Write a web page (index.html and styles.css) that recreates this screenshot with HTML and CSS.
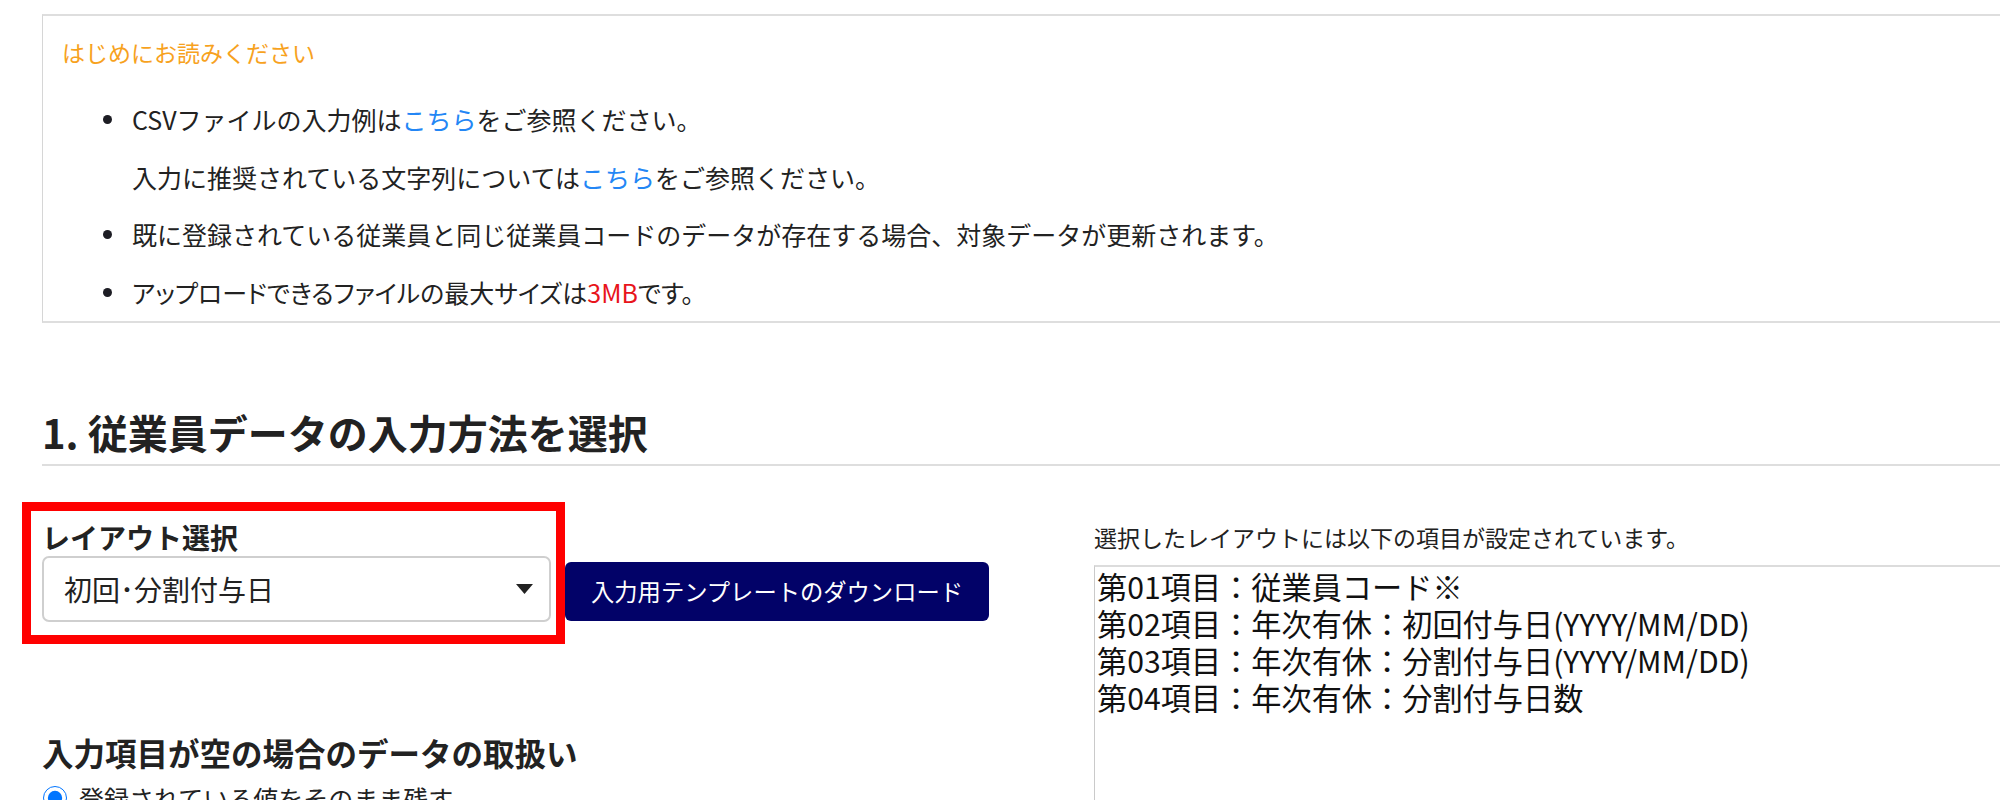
FILE: index.html
```html
<!DOCTYPE html>
<html lang="ja">
<head>
<meta charset="utf-8">
<title>従業員データの入力</title>
<link rel="stylesheet" href="styles.css">
</head>
<body>
<div class="page">
  <section class="notice">
    <h3 class="notice-title">はじめにお読みください</h3>
    <ul class="notes">
      <li>
        <div>
          <p>CSVファイルの入力例は<a class="link" href="#">こちら</a>をご参照ください。</p>
          <p>入力に推奨されている文字列については<a class="link" href="#">こちら</a>をご参照ください。</p>
        </div>
      </li>
      <li><p>既に登録されている従業員と同じ従業員コードのデータが存在する場合、対象データが更新されます。</p></li>
      <li><p class="tight">アップロードできるファイルの最大サイズは<span class="em-red">3MB</span>です。</p></li>
    </ul>
  </section>

  <h2 class="section-title">1. 従業員データの入力方法を選択</h2>

  <div class="layout-row">
    <div class="left-col">
      <div class="select-row">
        <div class="highlight">
          <label class="field-label">レイアウト選択</label>
          <div class="select">
            <span>初回･分割付与日</span>
            <svg class="caret" width="17" height="10" viewBox="0 0 17 10"><polygon points="0,0 17,0 8.5,10" fill="#222"/></svg>
          </div>
        </div>
        <button class="btn-download" type="button">入力用テンプレートのダウンロード</button>
      </div>

      <h3 class="empty-title">入力項目が空の場合のデータの取扱い</h3>
      <label class="radio-row"><input type="radio" name="empty" checked><span>登録されている値をそのまま残す</span></label>
    </div>

    <div class="right-col">
      <p class="fields-caption">選択したレイアウトには以下の項目が設定されています。</p>
      <div class="fields">
        <p>第01項目：従業員コード※</p>
        <p>第02項目：年次有休：初回付与日(YYYY/MM/DD)</p>
        <p>第03項目：年次有休：分割付与日(YYYY/MM/DD)</p>
        <p>第04項目：年次有休：分割付与日数</p>
      </div>
    </div>
  </div>
</div>
</body>
</html>
```

FILE: styles.css
```css
html, body {
  margin: 0;
  padding: 0;
  background: #fff;
}
body {
  overflow: hidden;
  font-family: "Noto Sans CJK JP", "Noto Sans", sans-serif;
  color: #222;
}
p { margin: 0; }

.page {
  width: 2100px;
  padding-left: 42px;
  box-sizing: border-box;
}

/* notice box */
.notice {
  margin-top: 14px;
  border-top: 2px solid #dedede;
  border-bottom: 2px solid #dedede;
  border-left: 1px solid #d6d6d6;
  padding: 19px 0 0 19px;
}
.notice-title {
  margin: 0;
  font-size: 23px;
  line-height: 34px;
  font-weight: 400;
  color: #f7a21e;
}
.notes {
  list-style: none;
  margin: 22px 0 0 0;
  padding: 0 0 0 41px;
}
.notes li {
  display: flex;
  align-items: flex-start;
  font-size: 25px;
  line-height: 57.5px;
}
.notes li::before {
  content: "";
  flex: none;
  width: 9px;
  height: 9px;
  border-radius: 50%;
  background: #1d1d24;
  margin-top: 24px;
  margin-right: 20px;
}
.notes .tight {
  font-feature-settings: "palt" 1;
}
.link {
  color: #2386f5;
  text-decoration: none;
}
.em-red { color: #e8141b; }

/* section title */
.section-title {
  margin: 81px 0 0 0;
  font-size: 40px;
  line-height: 56px;
  font-weight: 700;
  padding-bottom: 4px;
  border-bottom: 2px solid #dedede;
}

/* two-column layout */
.layout-row {
  display: grid;
  grid-template-columns: 1052px 1fr;
  margin-top: 36px;
}

.select-row {
  display: flex;
  align-items: flex-start;
}
.highlight {
  margin-left: -20px;
  border: 9px solid #ff0000;
  padding: 8px 5px 13px 11px;
  width: 509px;
}
.field-label {
  display: block;
  font-size: 28px;
  line-height: 37px;
  font-weight: 700;
}
.select {
  box-sizing: border-box;
  height: 66px;
  border: 2px solid #cfcfcf;
  border-radius: 7px;
  display: flex;
  align-items: center;
  justify-content: space-between;
  padding: 0 16px 0 20px;
  font-size: 28px;
  color: #222;
}
.caret { display: block; }

.btn-download {
  margin-top: 60px;
  height: 59px;
  padding: 0 26px;
  border: none;
  border-radius: 6px;
  background: #020268;
  color: #fff;
  font-family: inherit;
  font-size: 23.3px;
  line-height: 59px;
  white-space: nowrap;
}

.empty-title {
  margin: 88px 0 0 0;
  font-size: 31.5px;
  line-height: 40px;
  font-weight: 700;
}
.radio-row {
  display: flex;
  align-items: center;
  margin-top: 10px;
  font-size: 25px;
  line-height: 32px;
}
.radio-row input {
  width: 24px;
  height: 24px;
  margin: 0 12px 0 1px;
  accent-color: #0075ff;
}

.right-col {
  padding-top: 19px;
}
.fields-caption {
  font-size: 23px;
  line-height: 32px;
}
.fields {
  margin-top: 12px;
  border-top: 2px solid #dcdcdc;
  border-left: 1px solid #cacaca;
  height: 400px;
  padding: 1px 2px;
  font-size: 30.2px;
  line-height: 37px;
  color: #111;
}
```
